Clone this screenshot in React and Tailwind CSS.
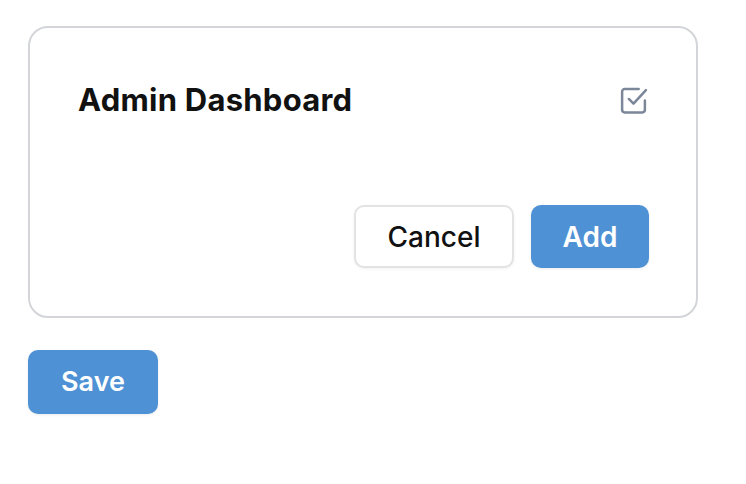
import React from "react";

function CheckIcon() {
  return (
    <svg width="29" height="29" viewBox="0 0 28 28" fill="none" stroke="#7b8699" strokeWidth="2.4" strokeLinecap="round" strokeLinejoin="round">
      <path d="M25 14v9a2.5 2.5 0 0 1-2.5 2.5h-17A2.5 2.5 0 0 1 3 23V5.5A2.5 2.5 0 0 1 5.5 3H19" />
      <path d="M9.5 12.5l4.5 4.5L26 4" />
    </svg>
  );
}

export default function App() {
  return (
    <div className="bg-white w-[746px] h-[484px] pt-[26px] pl-[28px]" style={{ fontFamily: "Inter, 'Noto Sans', sans-serif" }}>
      <div className="w-[670px] h-[292px] border-2 border-[#d3d5d9] rounded-[20px] pt-[48px] pb-[48px] pl-[48px] pr-[47px] flex flex-col justify-between">
        <div className="flex items-center justify-between">
          <div className="text-[31px] font-bold text-[#111111] leading-[48px] tracking-[0.25px]">Admin Dashboard</div>
          <div className="pr-[1px]"><CheckIcon /></div>
        </div>
        <div className="flex justify-end gap-[17px]">
          <button className="w-[160px] h-[63px] rounded-[10px] border-2 border-[#e3e3e3] bg-white text-[28px] font-medium text-[#111111] shadow-[0_1px_3px_rgba(0,0,0,0.06)]">Cancel</button>
          <button className="w-[118px] h-[63px] rounded-[10px] bg-[#4f91d5] text-[28px] font-semibold text-white shadow-[0_1px_3px_rgba(0,0,0,0.08)]">Add</button>
        </div>
      </div>
      <button className="mt-[32px] w-[130px] h-[64px] rounded-[10px] bg-[#4f91d5] text-[27px] font-semibold text-white shadow-[0_1px_3px_rgba(0,0,0,0.08)]">Save</button>
    </div>
  );
}
